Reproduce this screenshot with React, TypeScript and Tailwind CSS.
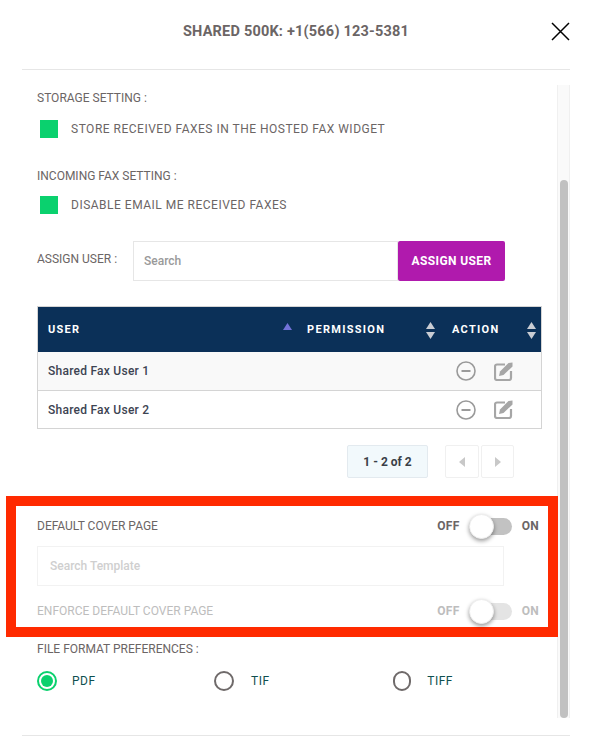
const users = [
  { name: "Shared Fax User 1", bg: "bg-[#f9f9f9]" },
  { name: "Shared Fax User 2", bg: "bg-white" },
];

function SortArrows({ up = "#c9ccd3", down = "#c9ccd3" }: { up?: string; down?: string }) {
  return (
    <svg width="9" height="17" viewBox="0 0 9 17" className="shrink-0">
      <path d="M4.5 0 9 7H0z" fill={up} />
      <path d="M4.5 17 0 10h9z" fill={down} />
    </svg>
  );
}

function MinusIcon() {
  return (
    <svg width="20" height="20" viewBox="0 0 20 20" fill="none">
      <circle cx="10" cy="10" r="9" stroke="#9a9a9a" strokeWidth="1.6" />
      <path d="M5.5 10h9" stroke="#9a9a9a" strokeWidth="2" />
    </svg>
  );
}

function EditIcon() {
  return (
    <svg width="19" height="19" viewBox="0 0 19 19" fill="none">
      <path
        d="M11 2.5H3a2 2 0 0 0-2 2V16a2 2 0 0 0 2 2h12a2 2 0 0 0 2-2V9"
        stroke="#a6a6a6"
        strokeWidth="2.2"
      />
      <path d="M5 14 6 9.5 14.5 1 18.5 .5 18.5 4.5 9.5 13z" fill="#a6a6a6" />
    </svg>
  );
}

function Toggle({ faded = false }: { faded?: boolean }) {
  return (
    <div className={`flex items-center text-[12px] font-bold tracking-[0.3px] ${faded ? "text-[#bdbdbd]" : "text-[#6b6565]"}`}>
      <span>OFF</span>
      <div className={`relative ml-[9px] mr-[10px] h-[17px] w-[43px] rounded-full ${faded ? "bg-[#e4e4e4]" : "bg-[#c2c2c2]"}`}>
        <div className="absolute left-0 top-[-4px] h-[25px] w-[25px] rounded-full border border-[#eeeeee] bg-white shadow-[0_2px_4px_rgba(0,0,0,0.4)]" />
      </div>
      <span>ON</span>
    </div>
  );
}

function Radio({ label, checked = false, className }: { label: string; checked?: boolean; className: string }) {
  return (
    <div className={`flex items-center ${className}`}>
      <div className={`flex h-[20px] w-[20px] items-center justify-center rounded-full border-2 ${checked ? "border-[#0ad16e]" : "border-[#6f6a6a]"}`}>
        {checked && <div className="h-[12px] w-[12px] rounded-full bg-[#0ad16e]" />}
      </div>
      <span className="text-[12px] tracking-[0.5px] text-[#0f4f50]">{label}</span>
    </div>
  );
}

export default function App() {
  return (
    <div className="flex h-[737px] w-[592px] flex-col overflow-hidden bg-white font-['Roboto',sans-serif] text-[#6b6565]">
      <header className="relative mx-[22px] flex h-[70px] shrink-0 items-center justify-center border-b border-[#e6e6e6] pb-[5px]">
        <h1 className="text-[14.5px] font-bold tracking-[0.2px] text-[#6b6565]">SHARED 500K: +1(566) 123-5381</h1>
        <svg width="19" height="19" viewBox="0 0 19 19" className="absolute right-0 top-[22px]">
          <path d="M1 1 18 18M18 1 1 18" stroke="#000" strokeWidth="1.5" fill="none" />
        </svg>
      </header>

      <div className="mx-[22px] mt-[15px] flex h-[634px] shrink-0">
        <main className="w-[535px] pl-[15px] text-[12px]">
          <p className="mt-[6px] leading-[14px]">STORAGE SETTING :</p>
          <div className="mt-[15px] flex items-center pl-[3px]">
            <div className="h-[18px] w-[18px] bg-[#0ad16e]" />
            <span className="ml-[13px] tracking-[0.5px]">STORE RECEIVED FAXES IN THE HOSTED FAX WIDGET</span>
          </div>

          <p className="mt-[31px] leading-[14px]">INCOMING FAX SETTING :</p>
          <div className="mt-[13px] flex items-center pl-[3px]">
            <div className="h-[18px] w-[18px] bg-[#0ad16e]" />
            <span className="ml-[13px] tracking-[0.5px]">DISABLE EMAIL ME RECEIVED FAXES</span>
          </div>

          <div className="mt-[27px] flex h-[40px]">
            <span className="w-[96px] pt-[11px] leading-[14px]">ASSIGN USER :</span>
            <div className="flex h-[40px] w-[265px] items-center border border-[#e6e6e6] pl-[10px] text-[12px] font-medium text-[#9a9a9a]">Search</div>
            <button className="h-[40px] w-[107px] rounded-[2px] bg-[#b01aad] text-[12px] font-bold tracking-[0.4px] text-white">ASSIGN USER</button>
          </div>

          <div className="mt-[25px] w-[505px] border border-[#d4d4d4]">
            <div className="flex h-[45px] items-center bg-[#0b3058] pt-[1px] text-[11px] font-bold tracking-[1.3px] text-white">
              <div className="flex w-[267px] items-center justify-between pl-[10px] pr-[13px]">
                <span>USER</span>
                <svg width="9" height="7" viewBox="0 0 9 7" className="mb-[8px]"><path d="M4.5 0 9 7H0z" fill="#7272d8" /></svg>
              </div>
              <div className="flex w-[147px] items-center justify-between pl-[2px] pr-[17px]">
                <span>PERMISSION</span>
                <SortArrows />
              </div>
              <div className="flex w-[85px] items-center justify-between pr-[1px]">
                <span>ACTION</span>
                <SortArrows />
              </div>
            </div>
            {users.map((u, i) => (
              <div key={u.name} className={`flex h-[38px] items-center ${u.bg} ${i > 0 ? "border-t border-[#d4d4d4]" : ""}`}>
                <span className="w-[418px] pl-[10px] text-[12px] font-medium tracking-[0.25px] text-[#3d4452]">{u.name}</span>
                <MinusIcon />
                <span className="ml-[18px]"><EditIcon /></span>
              </div>
            ))}
          </div>

          <div className="mt-[16px] flex w-[477px] justify-end">
            <div className="flex h-[33px] w-[81px] items-center justify-center rounded-[2px] border border-[#e3eaef] bg-[#f2f9fc] text-[12px] font-bold text-[#3a3f47]">1 - 2 of 2</div>
            <div className="ml-[17px] flex h-[33px] w-[34px] items-center justify-center rounded-[2px] border border-[#f0f0f0]">
              <svg width="6" height="10" viewBox="0 0 6 10"><path d="M6 0v10L0 5z" fill="#c8c8c8" /></svg>
            </div>
            <div className="ml-[2px] flex h-[33px] w-[33px] items-center justify-center rounded-[2px] border border-[#f0f0f0]">
              <svg width="6" height="10" viewBox="0 0 6 10"><path d="M0 0v10l6-5z" fill="#c8c8c8" /></svg>
            </div>
          </div>

          <section className="relative mt-[18px] h-[141px] w-[502px]">
            <div className="pointer-events-none absolute inset-y-0 left-[-31px] w-[552px] border-[10px] border-[#ff2a00]" />
            <div className="flex items-center justify-between pt-[20px]">
              <span className="leading-[20px]">DEFAULT COVER PAGE</span>
              <Toggle />
            </div>
            <div className="mt-[10px] flex h-[40px] w-[467px] items-center border border-[#f2f2f2] pl-[12px] font-medium text-[#cfcfcf]">Search Template</div>
            <div className="mt-[15px] flex items-center justify-between text-[#bdbdbd]">
              <span className="leading-[20px]">ENFORCE DEFAULT COVER PAGE</span>
              <Toggle faded />
            </div>
          </section>

          <p className="mt-[5px] leading-[14px]">FILE FORMAT PREFERENCES :</p>
          <div className="mt-[15px] flex">
            <Radio label="PDF" checked className="w-[177px] gap-[15px]" />
            <Radio label="TIF" className="w-[178px] gap-[17px]" />
            <Radio label="TIFF" className="ml-[1px] w-[60px] gap-[16px]" />
          </div>
        </main>

        <div className="h-[633px] w-[13px] border-x border-[#f0f0f0] bg-[#fafafa] pl-[2px] pt-[95px]">
          <div className="h-[538px] w-[8px] rounded-full bg-[#c1c1c1]" />
        </div>
      </div>

      <div className="mx-[22px] mt-[16px] border-t border-[#e6e6e6]" />
    </div>
  );
}
